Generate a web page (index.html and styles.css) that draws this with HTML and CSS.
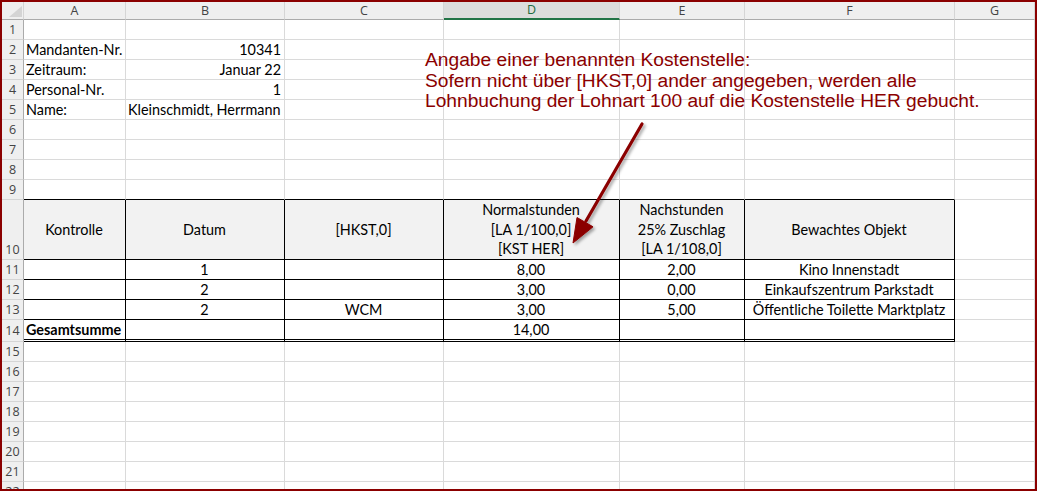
FILE: index.html
```html
<!DOCTYPE html>
<html lang="de">
<head>
    <meta charset="UTF-8">
    <title>Kostenstelle – Lohnbuchung</title>
    <link rel="stylesheet" href="styles.css">
</head>
<body>
<div class="sheet">
    <table class="grid">
        <colgroup>
            <col class="c-rh"><col class="c-a"><col class="c-b"><col class="c-c">
            <col class="c-d"><col class="c-e"><col class="c-f"><col class="c-g">
        </colgroup>
        <thead>
        <tr class="col-head">
            <th class="corner"><span class="corner-tri"></span></th>
            <th>A</th><th>B</th><th>C</th><th class="sel">D</th><th>E</th><th>F</th><th>G</th>
        </tr>
        </thead>
        <tbody>
        <tr><th>1</th><td></td><td></td><td></td><td></td><td></td><td></td><td></td></tr>
        <tr><th>2</th><td>Mandanten-Nr.</td><td class="right">10341</td><td></td><td></td><td></td><td></td><td></td></tr>
        <tr><th>3</th><td>Zeitraum:</td><td class="right">Januar 22</td><td></td><td></td><td></td><td></td><td></td></tr>
        <tr><th>4</th><td>Personal-Nr.</td><td class="right">1</td><td></td><td></td><td></td><td></td><td></td></tr>
        <tr><th>5</th><td>Name:</td><td>Kleinschmidt, Herrmann</td><td></td><td></td><td></td><td></td><td></td></tr>
        <tr><th>6</th><td></td><td></td><td></td><td></td><td></td><td></td><td></td></tr>
        <tr><th>7</th><td></td><td></td><td></td><td></td><td></td><td></td><td></td></tr>
        <tr><th>8</th><td></td><td></td><td></td><td></td><td></td><td></td><td></td></tr>
        <tr><th>9</th><td class="above"></td><td class="above"></td><td class="above"></td><td class="above"></td><td class="above"></td><td class="above"></td><td></td></tr>
        <tr class="r-head">
            <th class="bottom">10</th>
            <td class="box head">Kontrolle</td>
            <td class="box head">Datum</td>
            <td class="box head">[HKST,0]</td>
            <td class="box head">Normalstunden<br>[LA 1/100,0]<br>[KST HER]</td>
            <td class="box head">Nachstunden<br>25% Zuschlag<br>[LA 1/108,0]</td>
            <td class="box head">Bewachtes Objekt</td>
            <td></td>
        </tr>
        <tr><th>11</th><td class="box"></td><td class="box mid">1</td><td class="box"></td><td class="box mid">8,00</td><td class="box mid">2,00</td><td class="box mid">Kino Innenstadt</td><td></td></tr>
        <tr><th>12</th><td class="box"></td><td class="box mid">2</td><td class="box"></td><td class="box mid">3,00</td><td class="box mid">0,00</td><td class="box mid">Einkaufszentrum Parkstadt</td><td></td></tr>
        <tr><th>13</th><td class="box"></td><td class="box mid">2</td><td class="box mid">WCM</td><td class="box mid">3,00</td><td class="box mid">5,00</td><td class="box mid">Öffentliche Toilette Marktplatz</td><td></td></tr>
        <tr class="r-total"><th>14</th><td class="box sum"><b>Gesamtsumme</b></td><td class="box sum"></td><td class="box sum"></td><td class="box sum mid">14,00</td><td class="box sum"></td><td class="box sum"></td><td></td></tr>
        <tr><th>15</th><td></td><td></td><td></td><td></td><td></td><td></td><td></td></tr>
        <tr><th>16</th><td></td><td></td><td></td><td></td><td></td><td></td><td></td></tr>
        <tr><th>17</th><td></td><td></td><td></td><td></td><td></td><td></td><td></td></tr>
        <tr><th>18</th><td></td><td></td><td></td><td></td><td></td><td></td><td></td></tr>
        <tr><th>19</th><td></td><td></td><td></td><td></td><td></td><td></td><td></td></tr>
        <tr><th>20</th><td></td><td></td><td></td><td></td><td></td><td></td><td></td></tr>
        <tr><th>21</th><td></td><td></td><td></td><td></td><td></td><td></td><td></td></tr>
        <tr><th>22</th><td></td><td></td><td></td><td></td><td></td><td></td><td></td></tr>
        </tbody>
    </table>

    <!-- text box and arrow drawn over the sheet -->
    <div class="note">
        Angabe einer benannten Kostenstelle:<br>
        Sofern nicht über [HKST,0] ander angegeben, werden alle<br>
        Lohnbuchung der Lohnart 100 auf die Kostenstelle HER gebucht.
    </div>
    <svg class="arrow" width="1033" height="487" viewBox="2 2 1033 487">
        <defs>
            <filter id="shadow" x="-50%" y="-50%" width="200%" height="200%">
                <feDropShadow dx="2" dy="2" stdDeviation="1.6" flood-color="#000" flood-opacity="0.35"/>
            </filter>
        </defs>
        <g filter="url(#shadow)" fill="#8b0000" stroke="#8b0000">
            <line x1="642" y1="124" x2="586" y2="221" stroke-width="3.2" stroke-linecap="round"/>
            <polygon points="573,243 577,217.5 593,226.8" stroke-width="1" stroke-linejoin="round"/>
        </g>
    </svg>
</div>
</body>
</html>
```

FILE: styles.css
```css
html, body {
    margin: 0;
    padding: 0;
    background: #ffffff;
}

.sheet {
    position: relative;
    width: 1033px;
    height: 487px;
    border: 2px solid #8b0000;
    overflow: hidden;
    font-family: Lato, "Liberation Sans", sans-serif;
}

.grid {
    border-collapse: separate;
    border-spacing: 0;
    table-layout: fixed;
    width: 1033px;
}

.c-rh { width: 22px; }
.c-a { width: 102px; }
.c-b { width: 159px; }
.c-c { width: 159px; }
.c-d { width: 176px; }
.c-e { width: 125px; }
.c-f { width: 210px; }
.c-g { width: 80px; }

/* headers */
.grid th {
    background: #efefef;
    color: #444444;
    font-family: "Open Sans", "Noto Sans", sans-serif;
    font-weight: normal;
    font-size: 12.5px;
    padding: 0;
    text-align: center;
    white-space: nowrap;
}

.col-head {
    height: 18px;
}

.col-head th {
    border-right: 1px solid #d5d5d5;
    border-bottom: 1px solid #ababab;
    line-height: 16px;
}

.col-head th.sel {
    background: #dcdcdc;
    color: #1e6b3f;
    border-bottom: 2px solid #217346;
}

.col-head th.corner {
    text-align: right;
    vertical-align: bottom;
    padding: 0 1px 2px 0;
    line-height: 0;
}

.corner-tri {
    display: inline-block;
    width: 0;
    height: 0;
    border-left: 13px solid transparent;
    border-bottom: 11px solid #d4d4d4;
}

tbody th {
    border-right: 1px solid #ababab;
    border-bottom: 1px solid #d5d5d5;
    line-height: 19px;
}

tbody th.bottom {
    vertical-align: bottom;
}

/* cells */
.grid tr {
    height: 20px;
}

.grid tr.col-head {
    height: 18px;
}

.grid tr.r-head {
    height: 60px;
}

.grid tr.r-total {
    height: 22px;
}

.grid td {
    border-right: 1px solid #dadada;
    border-bottom: 1px solid #dadada;
    padding: 0 3px 0 2px;
    font-size: 14.4px;
    line-height: 19px;
    color: #000000;
    white-space: nowrap;
    overflow: visible;
}

.right {
    text-align: right;
}

.mid {
    text-align: center;
}

.grid td.above {
    border-bottom-color: #000000;
}

.grid td.box {
    border-right-color: #000000;
    border-bottom-color: #000000;
}

.grid td.head {
    background: #f2f2f2;
    text-align: center;
    line-height: 19.5px;
}

.grid td.sum {
    border-bottom: 3px double #000000;
}

/* annotation */
.note {
    position: absolute;
    left: 423px;
    top: 48px;
    font-family: "Liberation Sans", Arial, sans-serif;
    font-size: 19.2px;
    line-height: 20.5px;
    color: #8b0000;
    white-space: nowrap;
}

.arrow {
    position: absolute;
    left: 0;
    top: 0;
    pointer-events: none;
}
```
